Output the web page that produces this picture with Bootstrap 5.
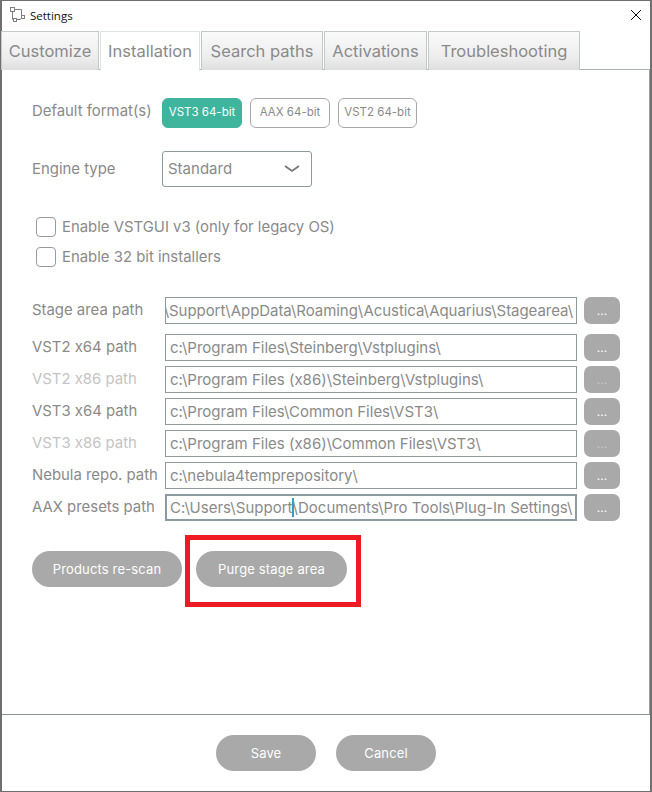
<!DOCTYPE html>
<html lang="en">
<head>
    <meta charset="UTF-8">
    <meta name="viewport" content="width=device-width, initial-scale=1.0">
    <title>Settings</title>
    <link href="https://cdn.jsdelivr.net/npm/bootstrap@5.3.0/dist/css/bootstrap.min.css" rel="stylesheet">
    <style>
        html, body { height: 100%; background: #fff; }
        body { font-family: Inter, "Liberation Sans", sans-serif; font-feature-settings: "calt" 0; color: #8a8a8a; overflow: hidden; }

        .win { width: 652px; height: 792px; border: 1px solid #6f6f6f; border-left-width: 2px; border-right-width: 2px; }
        .win-title { height: 30px; padding-left: 7px; padding-right: 8px; }
        .win-title span { font-family: "Open Sans", sans-serif; font-size: 11.5px; color: #111; margin-left: 5px; }
        .win-title svg { margin-bottom: 2px; }
        .win-close { background: none; border: 0; padding: 0; line-height: 0; }

        .tab-strip { height: 39px; border-bottom: 1px solid #a9b0b0; gap: 1px; margin-left: -1px; }
        .tab-strip .nav-link {
            height: 39px; margin: 0; padding: 1px 0 0; display: flex; align-items: center; justify-content: center;
            font-size: 16.5px; color: #8a8a8a; border: 1px solid #c4c8c8; border-bottom: 0; border-radius: 0;
            background: linear-gradient(#fafafa, #ececec 70%, #dedede);
        }
        .tab-strip .nav-link.active { background: #fff; height: 40px; margin-bottom: -1px; color: #8a8a8a; padding-top: 0; }

        .tab-body { height: 644px; padding: 28px 29px 0 30px; border-right: 1px solid #9aa0a0; }
        .lbl { width: 133px; font-size: 14.9px; flex-shrink: 0; }
        .lbl.off { color: #c4c4c4; }
        .lbl.wide { width: 130px; }
        .lbl.mid { width: 122px; padding-bottom: 3px; }

        .fmt-btn {
            width: 80px; height: 30px; padding: 0; font-size: 11.5px; color: #8a8a8a;
            border: 1px solid #a8a8a8; border-radius: 6px; background: #fff;
        }
        .fmt-btn.on { background: #3eb59c; border-color: #3eb59c; color: #fff; }
        .fmt-btn.nudge { width: 79px; }

        .engine {
            width: 150px; height: 36px; padding: 0 5px; font-size: 15px; color: #8a8a8a;
            font-family: inherit; border-color: #8f9a9a; border-radius: 3px;
            background-position: right 11px center; background-size: 16px 8px;
            background-image: url("data:image/svg+xml,%3csvg xmlns='http://www.w3.org/2000/svg' viewBox='0 0 16 8'%3e%3cpath fill='none' stroke='%23777' stroke-width='1.8' d='M1 1l7 5 7-5'/%3e%3c/svg%3e");
        }

        .opt-list { margin-top: 30px; gap: 10px; }
        .opt { min-height: 20px; height: 20px; margin: 0; padding: 0; gap: 6px; }
        .opt .form-check-input {
            width: 20px; height: 20px; margin: 0 0 0 4px; float: none; flex-shrink: 0;
            border: 1px solid #9a9a9a; border-radius: 4px;
        }
        .opt label { font-size: 14.9px; }

        .path-list { margin-top: 30px; gap: 5px; }
        .path-row { height: 27px; }
        .path-row.first { margin-bottom: 5px; }
        .path-box {
            width: 412px; height: 27px; padding: 0 4px; font-size: 15px; line-height: 25px; color: #8a8a8a;
            border: 1px solid #8f9a9a; border-radius: 0; white-space: nowrap; overflow: hidden;
        }
        .path-box.scrolled { padding: 0 3px 0 0; letter-spacing: -.05px; }
        .path-box.focused { border: 2px solid #8b9b9f; padding: 0 3px; line-height: 23px; letter-spacing: .02px; }
        .txt-caret { border-left: 2px solid #3a9cc4; margin: 0 -1px; }
        .dots-btn {
            width: 36px; height: 27px; margin-left: 7px; padding: 0; font-size: 12px; line-height: 27px;
            color: #fff; background: #a9a9a9; border: 0; border-radius: 7px;
        }
        .dots-btn.off { color: #c9c9c9; }

        .pill-btn {
            height: 36px; padding: 1px 0 0; font-size: 13px; letter-spacing: .15px; color: #fff;
            background: #a9a9a9; border: 0; border-radius: 18px;
        }
        .w-150 { width: 150px; }
        .w-151 { width: 151px; }
        .w-100px { width: 100px; }

        .action-row { position: relative; margin-top: 30px; gap: 14px; }
        .red-mark { position: absolute; left: 153px; top: -16px; width: 176px; height: 72px; border: 5px solid #ed1c24; pointer-events: none; }

        .win-foot { height: 76px; border-top: 1px solid #8b9292; gap: 20px; }
        .win-foot .pill-btn { padding-top: 2px; }
    </style>
</head>
<body>
<div class="win d-flex flex-column">
    <!-- Title bar -->
    <div class="win-title d-flex align-items-center">
        <svg width="16" height="16" viewBox="0 0 16 16" fill="none" stroke="#808080">
            <rect x="1.5" y="0.5" width="4" height="4"/>
            <rect x="4.5" y="11.5" width="3" height="3"/>
            <rect x="12.5" y="8.5" width="3" height="3"/>
            <path d="M5.5 2.5H12.5V8.5M3.5 4.5V12.5H4.5M7.5 12.5H11L12.5 11.5"/>
        </svg>
        <span>Settings</span>
        <button class="win-close ms-auto" type="button" aria-label="Close">
            <svg width="12" height="12" viewBox="0 0 12 12" stroke="#111" stroke-width="1"><path d="M1 1l10 10M11 1L1 11"/></svg>
        </button>
    </div>

    <!-- Tabs -->
    <ul class="nav nav-tabs tab-strip flex-nowrap">
        <li class="nav-item"><a class="nav-link" style="width: 98px" href="#">Customize</a></li>
        <li class="nav-item"><a class="nav-link active" style="width: 100px" href="#">Installation</a></li>
        <li class="nav-item"><a class="nav-link" style="width: 122px" href="#">Search paths</a></li>
        <li class="nav-item"><a class="nav-link" style="width: 103px" href="#">Activations</a></li>
        <li class="nav-item"><a class="nav-link" style="width: 152px" href="#">Troubleshooting</a></li>
    </ul>

    <div class="tab-body">
        <div class="d-flex align-items-center gap-2">
            <div class="lbl mid">Default format(s)</div>
            <button class="btn fmt-btn on" type="button">VST3 64-bit</button>
            <button class="btn fmt-btn" type="button">AAX 64-bit</button>
            <button class="btn fmt-btn nudge" type="button">VST2 64-bit</button>
        </div>

        <div class="d-flex align-items-center" style="margin-top: 23px">
            <div class="lbl wide">Engine type</div>
            <select class="form-select engine">
                <option>Standard</option>
            </select>
        </div>

        <div class="opt-list d-flex flex-column">
            <div class="form-check opt d-flex align-items-center">
                <input class="form-check-input" type="checkbox" id="vstgui">
                <label class="form-check-label" for="vstgui">Enable VSTGUI v3 (only for legacy OS)</label>
            </div>
            <div class="form-check opt d-flex align-items-center">
                <input class="form-check-input" type="checkbox" id="bit32">
                <label class="form-check-label" for="bit32">Enable 32 bit installers</label>
            </div>
        </div>

        <div class="path-list d-flex flex-column">
            <div class="path-row first d-flex align-items-center">
                <div class="lbl">Stage area path</div>
                <div class="form-control path-box scrolled d-flex justify-content-end">\Support\AppData\Roaming\Acustica\Aquarius\Stagearea\</div>
                <button class="btn dots-btn" type="button">...</button>
            </div>
            <div class="path-row d-flex align-items-center">
                <div class="lbl">VST2 x64 path</div>
                <div class="form-control path-box">c:\Program Files\Steinberg\Vstplugins\</div>
                <button class="btn dots-btn" type="button">...</button>
            </div>
            <div class="path-row d-flex align-items-center">
                <div class="lbl off">VST2 x86 path</div>
                <div class="form-control path-box">c:\Program Files (x86)\Steinberg\Vstplugins\</div>
                <button class="btn dots-btn off" type="button">...</button>
            </div>
            <div class="path-row d-flex align-items-center">
                <div class="lbl">VST3 x64 path</div>
                <div class="form-control path-box">c:\Program Files\Common Files\VST3\</div>
                <button class="btn dots-btn" type="button">...</button>
            </div>
            <div class="path-row d-flex align-items-center">
                <div class="lbl off">VST3 x86 path</div>
                <div class="form-control path-box">c:\Program Files (x86)\Common Files\VST3\</div>
                <button class="btn dots-btn off" type="button">...</button>
            </div>
            <div class="path-row d-flex align-items-center">
                <div class="lbl">Nebula repo. path</div>
                <div class="form-control path-box">c:\nebula4temprepository\</div>
                <button class="btn dots-btn" type="button">...</button>
            </div>
            <div class="path-row d-flex align-items-center">
                <div class="lbl">AAX presets path</div>
                <div class="form-control path-box focused">C:\Users\Support<span class="txt-caret"></span>\Documents\Pro Tools\Plug-In Settings\</div>
                <button class="btn dots-btn" type="button">...</button>
            </div>
        </div>

        <div class="action-row d-flex">
            <button class="btn pill-btn w-150" type="button">Products re-scan</button>
            <button class="btn pill-btn w-151" type="button">Purge stage area</button>
            <div class="red-mark"></div>
        </div>
    </div>

    <div class="win-foot d-flex align-items-center justify-content-center">
        <button class="btn pill-btn w-100px" type="button">Save</button>
        <button class="btn pill-btn w-100px" type="button">Cancel</button>
    </div>
</div>

<script src="https://cdn.jsdelivr.net/npm/bootstrap@5.3.0/dist/js/bootstrap.bundle.min.js"></script>
</body>
</html>
